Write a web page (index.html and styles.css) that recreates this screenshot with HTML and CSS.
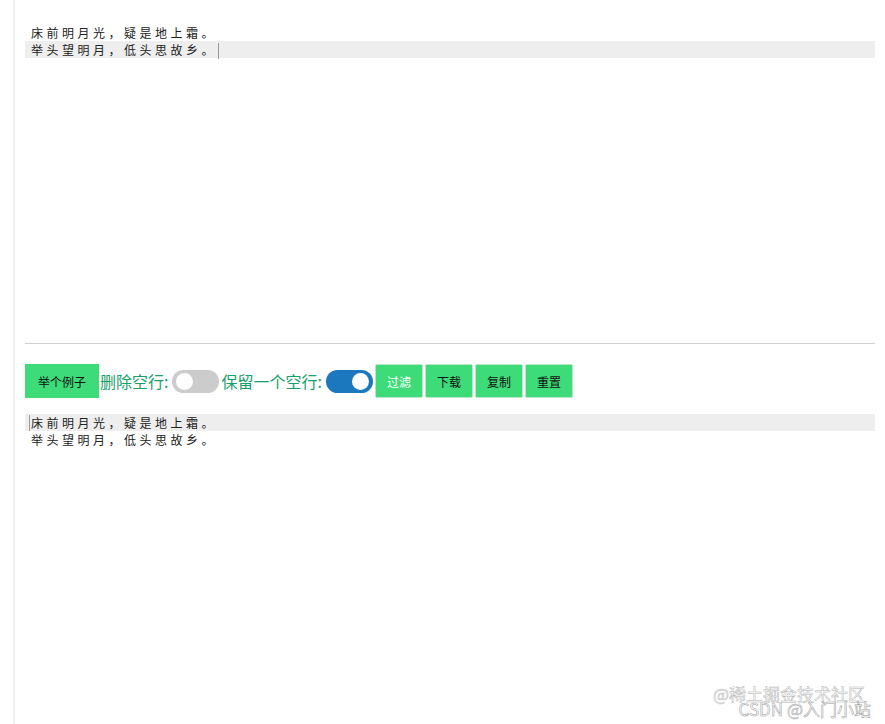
FILE: index.html
```html
<!DOCTYPE html>
<html lang="zh">
<head>
<meta charset="utf-8">
<title>空行过滤</title>
<link rel="stylesheet" href="styles.css">
</head>
<body>
<div class="page">
  <div class="wrap">
    <div class="editor editor-top">
      <div class="line">床前明月光，疑是地上霜。</div>
      <div class="line active">举头望明月，低头思故乡。<span class="cursor"></span></div>
    </div>
    <div class="toolbar">
      <button class="btn btn-example">举个例子</button>
      <span class="label">删除空行:</span>
      <span class="toggle"><span class="knob"></span></span>
      <span class="label">保留一个空行:</span>
      <span class="toggle on"><span class="knob"></span></span>
      <button class="btn btn-small btn-white">过滤</button>
      <button class="btn btn-small">下载</button>
      <button class="btn btn-small">复制</button>
      <button class="btn btn-small">重置</button>
    </div>
    <div class="editor editor-bottom">
      <div class="line active"><span class="cursor cursor-start"></span>床前明月光，疑是地上霜。</div>
      <div class="line">举头望明月，低头思故乡。</div>
    </div>
  </div>
  <div class="watermark">
    <div class="wm1">@稀土掘金技术社区</div>
    <div class="wm2">CSDN @入门小站</div>
  </div>
</div>
</body>
</html>
```
FILE: styles.css
```css
html, body {
  margin: 0;
  padding: 0;
  background: #fff;
}
body {
  font-family: "Noto Sans CJK SC", "Noto Sans", sans-serif;
  color: #222;
}
.page {
  position: relative;
  width: 885px;
  height: 724px;
  overflow: hidden;
  padding-left: 13px;
  box-sizing: border-box;
}
.wrap {
  border-left: 2px solid #f0f0f0;
  height: 724px;
  padding: 24px 10px 0 10px;
  box-sizing: border-box;
}
.editor {
  font-size: 12px;
  letter-spacing: 3.5px;
  line-height: 17px;
}
.editor-top {
  height: 319px;
  border-bottom: 1px solid #cfcfcf;
}
.line {
  height: 17px;
  padding-left: 6px;
  white-space: nowrap;
  position: relative;
}
.line.active {
  background: #eeeeee;
}
.cursor {
  display: inline-block;
  width: 1px;
  height: 16px;
  background: #999;
  vertical-align: -4px;
  margin-left: 1px;
}
.cursor-start {
  position: absolute;
  left: 4px;
  top: 1px;
  margin: 0;
}
.toolbar {
  display: flex;
  align-items: center;
  margin-top: 20px;
  height: 34px;
}
.btn {
  font-family: "Noto Sans CJK SC", sans-serif;
  font-size: 12px;
  height: 34px;
  border: 1px solid #5ad88c;
  background: #3ddc79;
  color: #111;
  padding: 0;
  margin: 0;
  cursor: pointer;
}
.btn-example {
  width: 74px;
  border-radius: 0;
  border-color: #3ddc79;
}
.btn-small {
  width: 48px;
  border-radius: 2px;
  border-color: #b9e6c9;
}
.btn-small + .btn-small {
  margin-left: 2px;
}
.btn-white {
  color: #fff;
  margin-left: 1px;
}
.label {
  color: #18a06c;
  font-size: 16px;
  font-family: "Noto Sans CJK SC", sans-serif;
  white-space: nowrap;
  margin-left: 1px;
}
.toggle {
  position: relative;
  display: inline-block;
  width: 47px;
  height: 23px;
  border-radius: 12px;
  background: #cccccc;
  margin: 0 1px 0 4px;
}
.toggle .knob {
  position: absolute;
  top: 3px;
  left: 4px;
  width: 17px;
  height: 17px;
  border-radius: 50%;
  background: #fff;
}
.toggle.on {
  background: #1b78bf;
}
.toggle.on .knob {
  left: auto;
  right: 4px;
}
.editor-bottom {
  margin-top: 16px;
}
.watermark {
  position: absolute;
  right: 14px;
  bottom: 8px;
  text-align: right;
  font-family: "Noto Sans CJK SC", "Liberation Sans", sans-serif;
  font-size: 17px;
  line-height: 15px;
}
.wm1 {
  color: #fff;
  -webkit-text-stroke: 0.5px #b4b4b4;
  margin-right: 6px;
}
.wm2 {
  color: #fff;
  -webkit-text-stroke: 0.5px #999;
}
```
